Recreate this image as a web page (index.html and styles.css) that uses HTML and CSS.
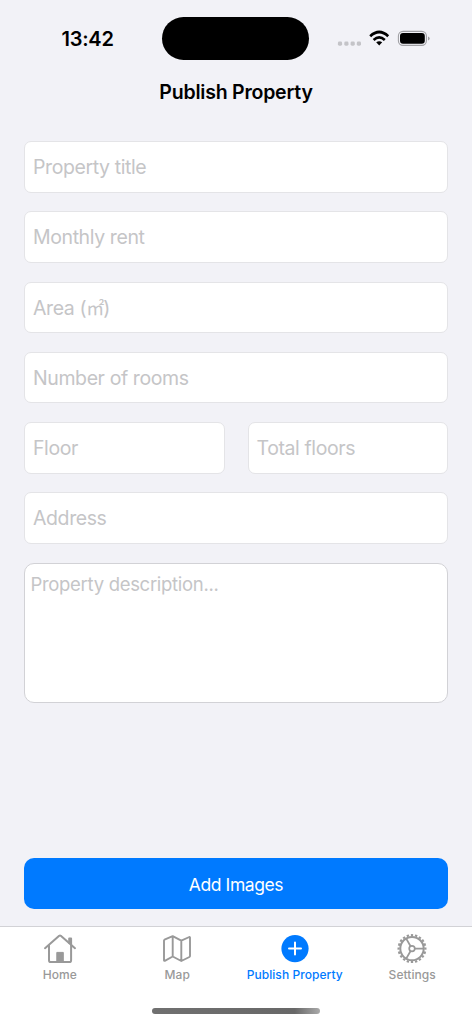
FILE: index.html
```html
<!DOCTYPE html>
<html lang="en">
<head>
<meta charset="utf-8">
<title>Publish Property</title>
<link rel="stylesheet" href="styles.css">
</head>
<body>
<div class="screen">
  <header class="status">
    <span class="clock">13:42</span>
    <div class="island"></div>
    <svg class="signals" width="96" height="24" viewBox="336 26 96 24">
      <g fill="#c4c4c8"><rect x="337.9" y="41.5" width="4.2" height="4.2" rx="1.4"/><rect x="344.3" y="41.5" width="4.2" height="4.2" rx="1.4"/><rect x="350.6" y="41.5" width="4.2" height="4.2" rx="1.4"/><rect x="356.8" y="41.5" width="4.2" height="4.2" rx="1.4"/></g>
      <g fill="none" stroke="#000" stroke-width="2.7"><path d="M370.2 36.2Q379.2 27.8 388.2 36.2"/><path d="M373.6 39.9Q379.2 34.9 384.8 39.9"/></g>
      <path d="M376.2 42.3Q379.2 40 382.2 42.3L379.2 45.5Z"/>
      <rect x="398.4" y="31.4" width="28" height="14" rx="4.6" fill="none" stroke="#a0a0a4" stroke-width="1.1"/>
      <rect x="400" y="33" width="24.8" height="10.8" rx="3"/>
      <path d="M428 36.4Q429.7 37 429.7 38.5Q429.7 40 428 40.6Z" fill="#a0a0a4"/>
    </svg>
  </header>
  <h1 class="title"><span>Publish Property</span></h1>
  <main class="form">
    <div class="field"><span>Property title</span></div>
    <div class="field"><span>Monthly rent</span></div>
    <div class="field"><span>Area (<span class="unit">㎡</span>)</span></div>
    <div class="field"><span>Number of rooms</span></div>
    <div class="row">
      <div class="field"><span>Floor</span></div>
      <div class="field"><span>Total floors</span></div>
    </div>
    <div class="field"><span>Address</span></div>
    <div class="description"><span>Property description...</span></div>
  </main>
  <div class="action"><span>Add Images</span></div>
  <nav class="tabs">
    <div class="tab">
      <svg width="34" height="32" viewBox="0 0 34 32" fill="none" stroke="#999" stroke-width="2" stroke-linecap="round" stroke-linejoin="round"><path d="M2 15.2L16.2 2.7Q17 2.1 17.8 2.7L32 15.2M6 12.3V27.2Q6 29.1 7.9 29.1H26.2Q28.1 29.1 28.1 27.2V12.3"/><path d="M26.2 10V5.6H28.1V12"/><path d="M13.8 28.5V19.4H20.3V28.5Z" fill="#999" stroke-width="1"/></svg>
      <span>Home</span>
    </div>
    <div class="tab">
      <svg width="34" height="32" viewBox="0 0 34 32" fill="none" stroke="#999" stroke-width="1.9" stroke-linejoin="round"><path d="M4 7.6Q4 7 4.5 6.7L12.7 3.1L21.3 7.6L29.3 4Q30 3.8 30 4.7V23Q30 23.7 29.4 24L21.3 28L12.7 23.5L4.8 27.8Q4 28.2 4 27.2ZM12.7 3.1V23.5M21.3 7.6V28"/></svg>
      <span>Map</span>
    </div>
    <div class="tab active">
      <svg width="34" height="32" viewBox="0 0 34 32"><circle cx="17" cy="15.6" r="13.6" fill="#007aff"/><path d="M11 15.6H23M17 9.6V21.6" stroke="#fff" stroke-width="2" stroke-linecap="round"/></svg>
      <span>Publish Property</span>
    </div>
    <div class="tab">
      <svg width="34" height="32" viewBox="0 0 34 32" fill="none" stroke="#999"><circle cx="17" cy="15.6" r="11.7" stroke-width="2"/><circle cx="17" cy="15.6" r="13.4" stroke-width="2.2" pathLength="80" stroke-dasharray="2.2 1.8" stroke-dashoffset="1.1"/><circle cx="17" cy="15.6" r="2.8" stroke-width="1.7"/><path d="M19.8 15.6H28.5M15.6 13.2L11.2 5.6M15.6 18L11.2 25.6" stroke-width="1.8"/></svg>
      <span>Settings</span>
    </div>
  </nav>
  <div class="foot"><div class="indicator"></div></div>
</div>
</body>
</html>
```
FILE: styles.css
```css
* { box-sizing: border-box; }
body { margin: 0; font-family: Inter, "Noto Sans CJK JP", sans-serif; }
.screen { width: 472px; height: 1024px; background: #f2f2f7; display: flex; flex-direction: column; overflow: hidden; }
.status { height: 76px; flex: none; display: grid; grid-template-columns: 162.4px 147px 1fr; align-items: start; }
.clock { margin: 26px 0 0 61.4px; font-size: 20px; line-height: 26px; font-weight: 600; letter-spacing: -0.2px; white-space: nowrap; }
.island { height: 43px; margin-top: 16.5px; border-radius: 22px; background: #000; }
.signals { margin: 26px 0 0 26.6px; }
.title { margin: 0; height: 32px; flex: none; text-align: center; font-size: 19.5px; line-height: 32px; font-weight: 600; letter-spacing: -0.22px; }
.form { margin: 33.3px 24px 0; flex: none; display: flex; flex-direction: column; gap: 18.6px; }
.field { height: 51.6px; flex: 1 0 51.6px; min-width: 0; padding-left: 8px; border: 1px solid #e4e4e7; border-radius: 7px; background: #fff; color: #c5c5c7; font-size: 19.5px; line-height: 51.4px; letter-spacing: -0.4px; white-space: nowrap; }
.row { display: flex; gap: 23px; }
.unit { font-family: "Noto Sans CJK JP", sans-serif; font-size: 18px; line-height: 1; letter-spacing: -1px; }
.description { height: 140.4px; margin-top: 0.3px; padding: 7px 5.4px; border: 1.2px solid #d2d2d6; border-radius: 10px; background: #fff; color: #c5c5c7; font-size: 18.5px; line-height: 26px; letter-spacing: -0.3px; }
.action { margin: 154.7px 24px 0; height: 51.5px; flex: none; border-radius: 10px; background: #007aff; color: #fff; font-size: 17.5px; line-height: 53px; letter-spacing: -0.42px; text-align: center; }
.tabs { height: 64px; flex: none; margin-top: 16.8px; padding: 6px 1px 0; border-top: 1px solid #d2d2d6; background: #fff; display: flex; }
.tab { flex: 1; display: flex; flex-direction: column; align-items: center; color: #999; font-size: 12px; line-height: 16px; font-weight: 500; letter-spacing: 0.06px; white-space: nowrap; }
.tab svg { flex: none; margin-bottom: 2px; }
.active { color: #007aff; }
.foot { flex: 1; background: #fff; padding-top: 18px; }
.indicator { width: 168px; height: 6px; margin: 0 auto; border-radius: 3px; background: linear-gradient(90deg, #707070, #686868 85%, #aaa); }
```
